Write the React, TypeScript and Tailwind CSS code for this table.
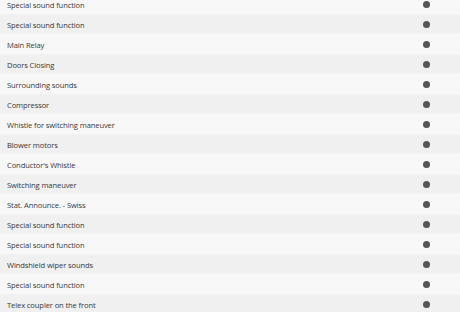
import React from "react";

const items = [
  "Special sound function",
  "Special sound function",
  "Main Relay",
  "Doors Closing",
  "Surrounding sounds",
  "Compressor",
  "Whistle for switching maneuver",
  "Blower motors",
  "Conductor's Whistle",
  "Switching maneuver",
  "Stat. Announce. - Swiss",
  "Special sound function",
  "Special sound function",
  "Windshield wiper sounds",
  "Special sound function",
  "Telex coupler on the front",
];

export default function App() {
  return (
    <div className="w-[460px] h-[312px] overflow-hidden bg-white" style={{ fontFamily: '"Open Sans", sans-serif' }}>
      <div className="-mt-[6px] flex flex-col">
        {items.map((t, i) => (
          <div
            key={i}
            className={`flex h-[20px] items-center pl-[7px] pt-[1px] ${i % 2 === 0 ? "bg-[#f8f8f8]" : "bg-[#f0f0f0]"}`}
          >
            <span className="flex-1 text-[7.6px] leading-[12px] tracking-[-0.12px] text-[#383838]">{t}</span>
            <span className="mr-[30px] h-[7px] w-[7px] rounded-full bg-[#555]" />
          </div>
        ))}
      </div>
    </div>
  );
}
